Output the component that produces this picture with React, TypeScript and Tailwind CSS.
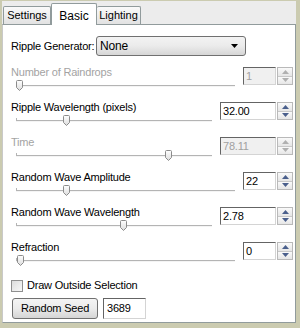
import React from 'react'

type Row = {
  label: string
  value: string
  disabled: boolean
  wide: boolean
  thumb: number
}

const rows: Row[] = [
  { label: 'Number of Raindrops', value: '1', disabled: true, wide: false, thumb: 0 },
  { label: 'Ripple Wavelength (pixels)', value: '32.00', disabled: false, wide: true, thumb: 47 },
  { label: 'Time', value: '78.11', disabled: true, wide: true, thumb: 149 },
  { label: 'Random Wave Amplitude', value: '22', disabled: false, wide: false, thumb: 47 },
  { label: 'Random Wave Wavelength', value: '2.78', disabled: false, wide: true, thumb: 104 },
  { label: 'Refraction', value: '0', disabled: false, wide: false, thumb: 1 },
]

function Thumb() {
  return (
    <svg width="7" height="11" viewBox="0 0 7 11">
      <defs>
        <linearGradient id="tg" x1="0" y1="0" x2="0" y2="1">
          <stop offset="0" stopColor="#ffffff" />
          <stop offset="1" stopColor="#dcdcdc" />
        </linearGradient>
      </defs>
      <path d="M1.5 0.5 H5.5 Q6.5 0.5 6.5 1.5 V7.5 L3.5 10.5 L0.5 7.5 V1.5 Q0.5 0.5 1.5 0.5 Z" fill="url(#tg)" stroke="#8c8c8c" />
    </svg>
  )
}

function Slider({ thumb }: { thumb: number }) {
  return (
    <div className="relative h-[14px] ml-[5px] mr-[8px]">
      <div className="absolute left-0 right-0 top-[7px] h-[1px] bg-[#b4b4b4]" />
      <div className="absolute left-0 right-0 top-[8px] h-[1px] bg-[#f4f4f4]" />
      <div className="absolute left-0 top-[5px] w-[1px] h-[3px] bg-[#b4b4b4]" />
      <div className="absolute top-[2px] h-[11px]" style={{ left: thumb }}>
        <Thumb />
      </div>
    </div>
  )
}

function Arrow({ up, disabled }: { up: boolean; disabled: boolean }) {
  return (
    <svg width="7" height="4" viewBox="0 0 7 4">
      <path d={up ? 'M0 4 L3.5 0 L7 4 Z' : 'M0 0 L3.5 4 L7 0 Z'} fill={disabled ? '#b0b0b0' : '#4a5f8c'} />
    </svg>
  )
}

function Spin({ value, disabled, wide }: { value: string; disabled: boolean; wide: boolean }) {
  return (
    <div className="flex mt-[1px] gap-[1px]">
      <div
        className={`h-[18px] ${wide ? 'w-[56px]' : 'w-[33px]'} border border-t-[#646464] border-l-[#646464] border-r-[#d4d4d4] border-b-[#d4d4d4] ${disabled ? 'bg-[#f0f0f0] text-[#a0a0a0]' : 'bg-white text-black'} pl-[2px] leading-[16px]`}
      >
        {value}
      </div>
      <div className="flex flex-col w-[16px] h-[18px] gap-[0px] border border-[#b9b9b9] bg-[#f0f0f0]">
        <div className="flex-1 flex items-center justify-center border-b border-[#c8c8c8] bg-gradient-to-b from-[#fafafa] to-[#e6e6e6]">
          <Arrow up disabled={disabled} />
        </div>
        <div className="flex-1 flex items-center justify-center bg-gradient-to-b from-[#fafafa] to-[#e6e6e6]">
          <Arrow up={false} disabled={disabled} />
        </div>
      </div>
    </div>
  )
}

export default function App() {
  return (
    <div
      className="w-[300px] h-[328px] bg-[#cbcbb0] pl-[2px] pr-[4px] pt-[1px] text-[11px] text-black"
      style={{ fontFamily: '"Liberation Sans", Arial, sans-serif' }}
    >
      <div className="bg-[#ececec]">
        {/* tabs */}
        <div className="flex items-end h-[23px] pl-[1px]">
          <div className="h-[18px] w-[48px] border border-b-0 border-[#919b9c] bg-gradient-to-b from-[#fafafa] to-[#e2e2e2] flex items-center justify-center rounded-t-[2px]">
            Settings
          </div>
          <div className="h-[22px] w-[46px] -mb-[1px] border border-b-0 border-[#919b9c] bg-white flex items-start pt-[3px] justify-center text-[12px] rounded-t-[2px] relative z-10">
            Basic
          </div>
          <div className="h-[18px] w-[44px] border border-b-0 border-l-0 border-[#919b9c] bg-gradient-to-b from-[#fafafa] to-[#e2e2e2] flex items-center justify-center rounded-t-[2px]">
            Lighting
          </div>
        </div>
        {/* panel */}
        <div className="h-[299px] border border-[#919b9c] border-l-[#c9c9c9] bg-white pl-[8px] pr-[2px] tracking-[-0.2px]">
          <div className="flex items-center mt-[11px] h-[20px]">
            <div className="w-[85px]">Ripple Generator:</div>
            <div className="w-[150px] h-[20px] rounded-[3px] border border-[#707070] bg-gradient-to-b from-[#f3f3f3] via-[#ebebeb] to-[#d6d6d6] flex items-center pl-[3px] pr-[7px] justify-between">
              <span className="text-[12px]">None</span>
              <svg width="7" height="4" viewBox="0 0 7 4">
                <path d="M0 0 L7 0 L3.5 4 Z" fill="#000" />
              </svg>
            </div>
          </div>
          <div className="mt-[10px]">
            {rows.map((r) => (
              <div key={r.label} className="flex items-start h-[35px]">
                <div className="flex-1 flex flex-col">
                  <div className={`h-[12px] leading-[12px] ${r.disabled ? 'text-[#a3a3a3]' : 'text-black'}`}>{r.label}</div>
                  <Slider thumb={r.thumb} />
                </div>
                <Spin value={r.value} disabled={r.disabled} wide={r.wide} />
              </div>
            ))}
          </div>
          <div className="flex items-center mt-[3px] h-[13px]">
            <div className="w-[12px] h-[12px] border border-[#8f8f8f] bg-gradient-to-br from-[#dcdcdc] to-[#f8f8f8]" />
            <span className="ml-[4px]">Draw Outside Selection</span>
          </div>
          <div className="flex items-center mt-[6px] ml-[1px]">
            <div className="w-[86px] h-[21px] rounded-[3px] border border-[#707070] bg-gradient-to-b from-[#f4f4f4] via-[#ebebeb] to-[#d5d5d5] flex items-center justify-center">
              Random Seed
            </div>
            <div className="ml-[5px] w-[43px] h-[21px] border border-t-[#646464] border-l-[#646464] border-r-[#d4d4d4] border-b-[#d4d4d4] bg-white pl-[3px] leading-[19px]">
              3689
            </div>
          </div>
        </div>
      </div>
    </div>
  )
}
